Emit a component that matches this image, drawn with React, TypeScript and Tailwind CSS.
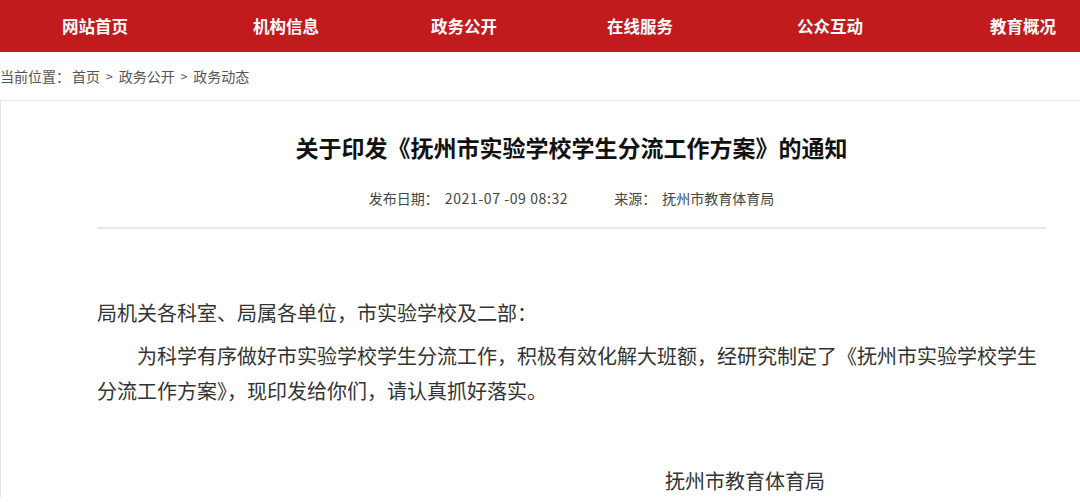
import React from 'react';

const navItems = [
  { label: '网站首页', cls: 'ml-[62px]' },
  { label: '机构信息', cls: 'ml-[125px]' },
  { label: '政务公开', cls: 'ml-[112px]' },
  { label: '在线服务', cls: 'ml-[110px]' },
  { label: '公众互动', cls: 'ml-[124px]' },
  { label: '教育概况', cls: 'ml-[127px]' },
];

const crumbs = ['首页', '政务公开', '政务动态'];

const font = { fontFamily: '"Noto Sans CJK SC", "Microsoft YaHei", sans-serif' };

export default function App() {
  return (
    <div className="w-[1080px] h-[502px] overflow-hidden bg-white" style={font}>
      {/* top nav */}
      <div className="h-[52px] bg-[#c21b1d] flex items-center">
        {navItems.map(item => (
          <a key={item.label} className={`${item.cls} text-white font-bold text-[16.5px] leading-none whitespace-nowrap`}>
            {item.label}
          </a>
        ))}
      </div>

      {/* breadcrumb */}
      <div className="h-[48px] flex items-center text-[14px] text-[#555]">
        <span>当前位置：</span>
        {crumbs.map((c, i) => (
          <React.Fragment key={c}>
            {i > 0 && <span className="mx-[6px] text-[12px]">&gt;</span>}
            <span className={i === 0 ? 'ml-[2px]' : ''}>{c}</span>
          </React.Fragment>
        ))}
      </div>

      {/* article */}
      <div className="w-[1142px] border-l border-t border-[#e4e4e4] px-[96px]">
        <h1 className="pt-[31px] text-center text-[23px] leading-[30px] font-bold text-[#111]">
          关于印发《抚州市实验学校学生分流工作方案》的通知
        </h1>
        <div className="mt-[26px] flex justify-center gap-[46px] text-[14px] leading-[20px] text-[#444]">
          <span>
            发布日期：<span className="ml-[6px] tracking-[0.6px]">2021-07 -09 08:32</span>
          </span>
          <span>
            来源：<span className="ml-[6px]">抚州市教育体育局</span>
          </span>
        </div>
        <div className="mt-[19px] h-[2px] bg-[#e8e8e8]" />

        <div className="mt-[66px] text-[20px] leading-[35px] text-[#333]">
          <p>局机关各科室、局属各单位，市实验学校及二部：</p>
          <p className="mt-[8px] indent-[40px]">
            为科学有序做好市实验学校学生分流工作，积极有效化解大班额，经研究制定了《抚州市实验学校学生分流工作方案》，现印发给你们，请认真抓好落实。
          </p>
          <p className="mt-[55px] pl-[568px]">抚州市教育体育局</p>
        </div>
      </div>
    </div>
  );
}
